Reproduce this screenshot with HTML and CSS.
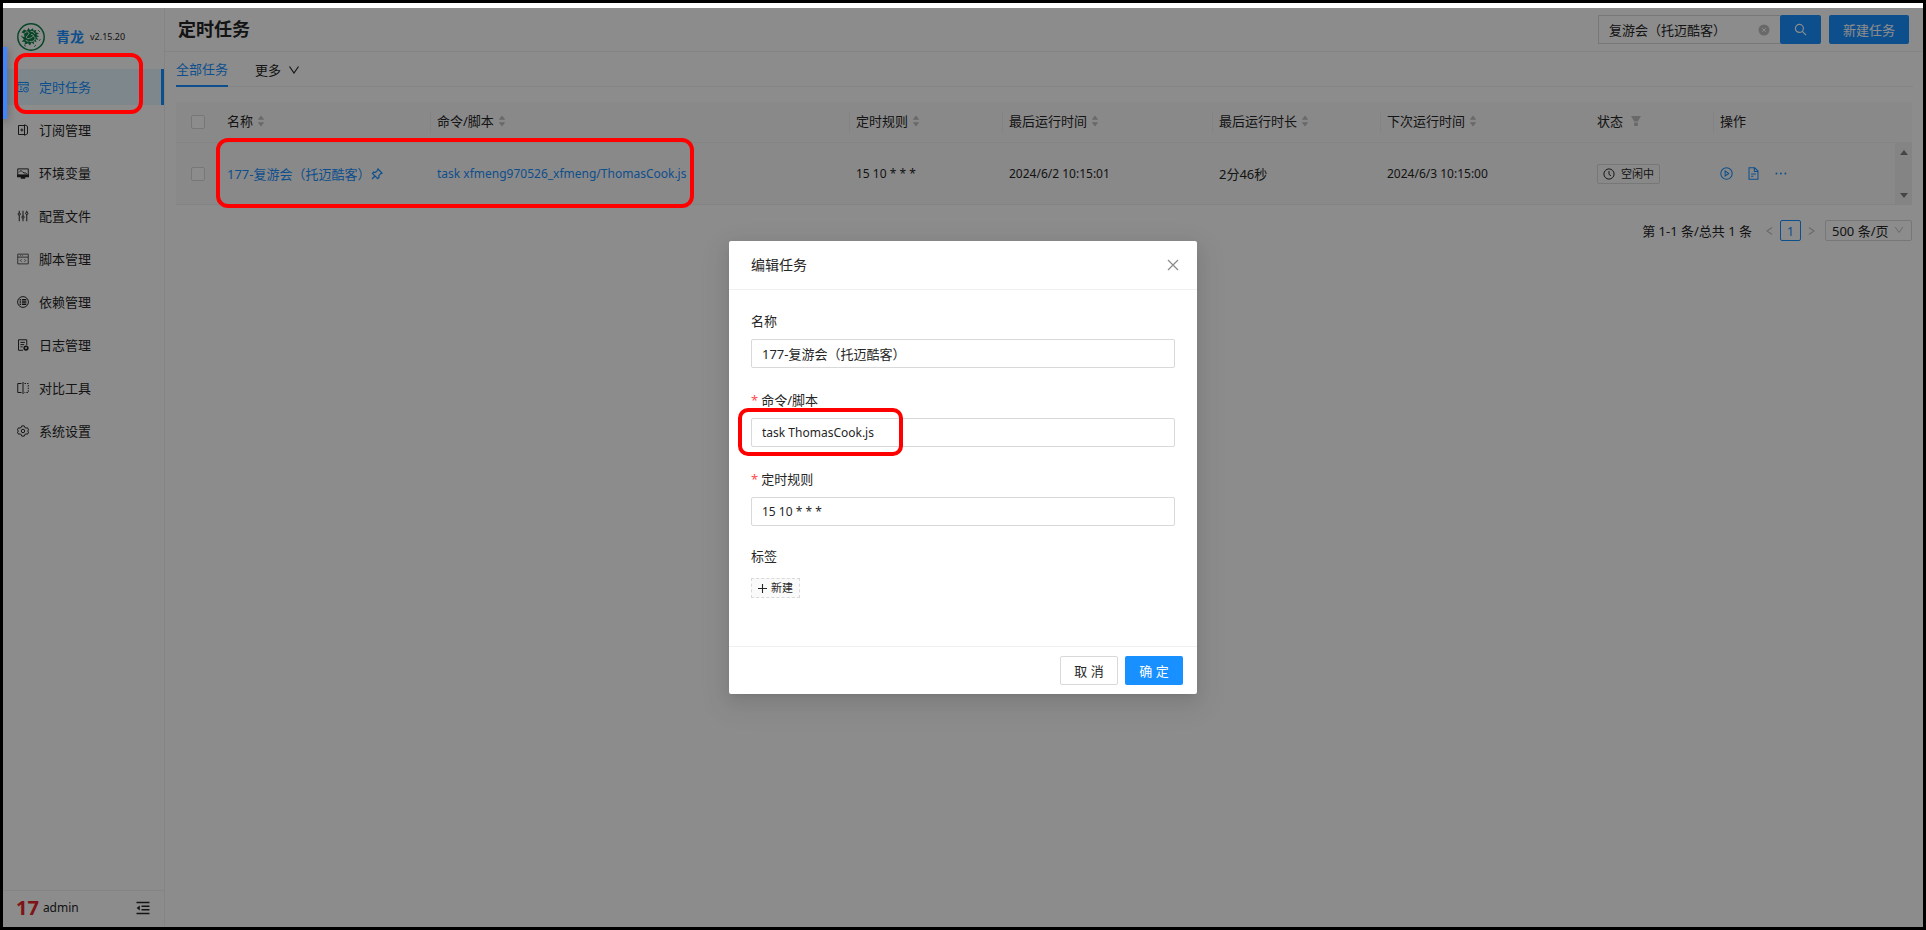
FILE: index.html
```html
<!DOCTYPE html>
<html lang="zh-CN">
<head>
<meta charset="utf-8">
<title>定时任务</title>
<link rel="stylesheet" href="styles.css">
</head>
<body>
<svg class="defs" aria-hidden="true">
  <symbol id="i-sort" viewBox="0 0 8 12"><path d="M4 0.500 7.300 4.800H.7zM4 11.500 7.300 7.200H.7z" fill="currentColor"/></symbol>
  <symbol id="i-down" viewBox="0 0 12 12"><path d="M1.500 2.500 6 9l4.500-6.500" fill="none" stroke="currentColor" stroke-width="1.200"/></symbol>
  <symbol id="i-clock" viewBox="0 0 16 16"><g fill="none" stroke="currentColor" stroke-width="1.300"><circle cx="8" cy="8" r="6.800"/><path d="M8 4v4.500l2.600 1.900"/></g></symbol>
</svg>
<div class="frame">
  <div class="strip"></div>
  <div class="app">
    <aside class="sidebar">
      <div class="brand">
        <svg class="logo" viewBox="0 0 28 28">
          <circle cx="14" cy="14" r="13.200" fill="#fff" stroke="#12804a" stroke-width="1.500"/>
          <path fill="#12804a" d="M4.500 9.500 7 6.500l3 1.200 1.500-3 1.500 2.500 3-2 .5 2.300 3-.5-1 2.200 3.500 1-2.500 1.500 2.800 2.300-3-.2 2.200 3.200-3-1 1 3.200-2.800-1.200.5 3.500-2.700-2-1.500 3-2-2.300-3.500 1.500.5-2.800-3.300-.4 2.200-2-2-2.500 2.800-.2-1-2.500L8.500 11z"/>
          <g fill="none" stroke="#fff" stroke-width=".9" stroke-linecap="round">
            <path d="M8 9.500c2-1.500 4-.5 4 1s-3 2-2.500 4 4 1 5.500-.5 3.500 0 3 2-3 3-5 2.500"/>
            <path d="M14 8.500c1.500-.5 3 .5 3.500 2M14.500 11.500l2 .8M9 17.500l2 .8"/>
          </g>
          <path fill="none" stroke="#12804a" stroke-width=".8" d="M4 13l2 1M21 7l2 2M22 18l1.500-2M7 22l2 1.500M19 22l-2 1.800"/>
        </svg>
        <a class="name" href="#">青龙</a><span class="version">v2.15.20</span>
      </div>
      <nav class="menu">
        <a class="item active" href="#"><svg class="ico" viewBox="0 0 16 16"><path d="M1 9V2h14v5M1 5h14M1 9v5h7M4 8h3M4 11h3M4.500 1v2M11.500 1v2"/><circle cx="12" cy="11.500" r="3.200"/><path d="M12 10v1.700h1.500"/></svg>定时任务</a>
        <a class="item" href="#"><svg class="ico" viewBox="0 0 16 16"><path d="M10 2H2v12h8M10 1v14l4-2V3zM6.500 6v4M4.500 8h4"/></svg>订阅管理</a>
        <a class="item" href="#"><svg class="ico" viewBox="0 0 16 16"><path d="M1 2.500h14v8.500H1z"/><path d="M1 11h14v1.500H1zM5 14.500h6" stroke-width="2"/><path d="M3 7c2-3 3-2 5 0s3 0 5 2"/></svg>环境变量</a>
        <a class="item" href="#"><svg class="ico" viewBox="0 0 16 16"><path d="M3 1v3M3 7v8M8 1v7M8 11v4M13 1v2M13 6v9"/><circle cx="3" cy="5.500" r="1.500"/><circle cx="8" cy="9.500" r="1.500"/><circle cx="13" cy="4.500" r="1.500"/></svg>配置文件</a>
        <a class="item" href="#"><svg class="ico light" viewBox="0 0 16 16"><path d="M1 1.500h14v13H1zM1 5.500h14M4 3.500h1M7 3.500h1M6 8.500 4.500 10 6 11.500M10 8.500l1.500 1.500L10 11.500"/></svg>脚本管理</a>
        <a class="item" href="#"><svg class="ico" viewBox="0 0 16 16"><circle cx="8" cy="8" r="7.200"/><path stroke-width="1.700" d="M3.500 5h1.800M6.500 5h6M3.500 8h1.800M6.500 8h6M3.500 11h1.800M6.500 11h6"/></svg>依赖管理</a>
        <a class="item" href="#"><svg class="ico" viewBox="0 0 16 16"><path d="M8 15H2V1h11v7M4.500 4.500h6M4.500 7.500h5M4.500 10.500h3"/><circle cx="12" cy="12" r="2.400" stroke-width="2.200"/></svg>日志管理</a>
        <a class="item" href="#"><svg class="ico" viewBox="0 0 16 16"><path d="M6 2H1v12h5M8 0v16"/><path d="M10 2h5v12h-5" stroke-dasharray="2 1.500"/></svg>对比工具</a>
        <a class="item" href="#"><svg class="ico" viewBox="0 0 16 16"><path d="M6.300 1.200h3.400l.6 2 1.700 1 2-.5 1.500 2.800L14 8l1.500 1.500-1.500 2.800-2-.5-1.700 1-.6 2H6.300l-.6-2-1.700-1-2 .5L.5 9.500 2 8 .5 6.500 2 3.700l2 .5 1.700-1z"/><circle cx="8" cy="8" r="2.300"/></svg>系统设置</a>
      </nav>
      <div class="user">
        <b class="mark">17</b><span class="who">admin</span>
        <button class="fold" type="button" aria-label="收起菜单"><svg viewBox="0 0 14 14"><path d="M.5 1.500h13M5.500 5.200h8M5.500 8.800h8M.5 12.500h13" stroke="currentColor" stroke-width="1.400"/><path d="M3.800 4.500v5L.6 7z" fill="currentColor"/></svg></button>
      </div>
    </aside>
    <main class="main">
      <header class="head">
        <h1>定时任务</h1>
        <div class="tools">
          <div class="search">
            <div class="field">
              <input type="text" aria-label="搜索任务" value="复游会（托迈酷客）">
              <svg class="clear" viewBox="0 0 12 12"><circle cx="6" cy="6" r="5.500" fill="currentColor"/><path d="m4.200 4.200 3.600 3.600m0-3.600L4.200 7.800" stroke="#fff"/></svg>
            </div>
            <button class="primary go" type="button" aria-label="搜索"><svg viewBox="0 0 14 14"><g fill="none" stroke="currentColor" stroke-width="1.300"><circle cx="5.800" cy="5.800" r="4.300"/><path d="m9 9 4 4"/></g></svg></button>
          </div>
          <button class="primary add" type="button">新建任务</button>
        </div>
      </header>
      <div class="tabs">
        <a class="tab on" href="#">全部任务</a>
        <a class="tab" href="#">更多<svg viewBox="0 0 12 12"><use href="#i-down"/></svg></a>
      </div>
      <section class="list">
        <div class="tablebox">
          <table>
            <colgroup><col class="c-check"><col class="c-wide"><col><col class="c-rule"><col class="c-wide"><col class="c-next"><col class="c-wide"><col class="c-state"><col class="c-ops"></colgroup>
            <thead><tr>
              <th class="check"><input type="checkbox" aria-label="全选"></th>
              <th>名称<svg class="sort"><use href="#i-sort"/></svg></th>
              <th>命令/脚本<svg class="sort"><use href="#i-sort"/></svg></th>
              <th>定时规则<svg class="sort"><use href="#i-sort"/></svg></th>
              <th>最后运行时间<svg class="sort"><use href="#i-sort"/></svg></th>
              <th>最后运行时长<svg class="sort"><use href="#i-sort"/></svg></th>
              <th>下次运行时间<svg class="sort"><use href="#i-sort"/></svg></th>
              <th class="state">状态<svg class="filter" viewBox="0 0 10 11"><path d="M0 .5h10L6.800 6H3.200zM3.200 7h3.600v3.500H3.200z" fill="currentColor"/></svg></th>
              <th>操作</th>
            </tr></thead>
            <tbody><tr>
              <td class="check"><input type="checkbox" aria-label="选择任务"></td>
              <td><a href="#">177-复游会（托迈酷客）<svg class="pin" viewBox="0 0 12 12"><path d="M7 1l4 4-1.200.6-2 2 .2 2-1.300 1L1.500 5.400l1-1.300 2 .2 2-2zM4 8l-3 3" fill="none" stroke="currentColor" stroke-width="1.200"/></svg></a></td>
              <td class="latin"><a href="#">task xfmeng970526_xfmeng/ThomasCook.js</a></td>
              <td class="latin">15 10 * * *</td>
              <td class="latin">2024/6/2 10:15:01</td>
              <td>2分46秒</td>
              <td class="latin">2024/6/3 10:15:00</td>
              <td><span class="status"><svg viewBox="0 0 16 16"><use href="#i-clock"/></svg>空闲中</span></td>
              <td><div class="ops">
                <a href="#" aria-label="运行"><svg viewBox="0 0 16 16"><g fill="none" stroke="currentColor" stroke-width="1.300"><circle cx="8" cy="8" r="7"/><path d="M6.300 5v6l4.500-3z"/></g></svg></a>
                <a href="#" aria-label="日志"><svg viewBox="0 0 16 16"><path d="M2.500 1h7L13.500 5v10h-11zM9 1v4.500h4.500M5 8.500h6M5 11.500h3" fill="none" stroke="currentColor" stroke-width="1.300"/></svg></a>
                <a href="#" aria-label="更多"><svg viewBox="0 0 16 16"><g fill="currentColor"><circle cx="3" cy="8" r="1.200"/><circle cx="8.500" cy="8" r="1.200"/><circle cx="14" cy="8" r="1.200"/></g></svg></a>
              </div></td>
            </tr></tbody>
          </table>
          <div class="scroll" aria-hidden="true"><svg viewBox="0 0 8 5"><path d="M0 5h8L4 0z" fill="currentColor"/></svg><svg viewBox="0 0 8 5"><path d="M0 0h8L4 5z" fill="currentColor"/></svg></div>
        </div>
        <div class="pager">
          <span class="total">第 1-1 条/总共 1 条</span>
          <button class="arrow" type="button" aria-label="上一页"><svg viewBox="0 0 8 10"><path d="M7 1 1 5l6 4" fill="none" stroke="currentColor" stroke-width="1.200"/></svg></button>
          <button class="page" type="button">1</button>
          <button class="arrow" type="button" aria-label="下一页"><svg viewBox="0 0 8 10"><path d="m1 1 6 4-6 4" fill="none" stroke="currentColor" stroke-width="1.200"/></svg></button>
          <div class="size"><select aria-label="每页条数"><option>500 条/页</option></select><svg viewBox="0 0 12 12"><use href="#i-down"/></svg></div>
        </div>
      </section>
    </main>
    <div class="mask">
      <form class="modal" role="dialog" aria-labelledby="dlg">
        <div class="mhead"><h2 id="dlg">编辑任务</h2><button class="close" type="button" aria-label="关闭"><svg viewBox="0 0 12 12"><path d="m1 1 10 10M11 1 1 11" stroke="currentColor" stroke-width="1.300"/></svg></button></div>
        <div class="mbody">
          <div class="row"><label for="f1">名称</label><input id="f1" type="text" value="177-复游会（托迈酷客）"></div>
          <div class="row"><label for="f2"><i>*</i>命令/脚本</label><input id="f2" class="latin" type="text" value="task ThomasCook.js"></div>
          <div class="row"><label for="f3"><i>*</i>定时规则</label><input id="f3" class="latin" type="text" value="15 10 * * *"></div>
          <div class="row tags"><label for="f4">标签</label><button id="f4" class="newtag" type="button"><svg viewBox="0 0 10 10"><path d="M5 0v10M0 5h10" stroke="currentColor" stroke-width="1.200"/></svg>新建</button></div>
        </div>
        <div class="mfoot"><button class="cancel" type="button">取 消</button><button class="primary ok" type="button">确 定</button></div>
      </form>
    </div>
    <div class="edge"></div>
    <div class="ring ring-menu"></div>
    <div class="ring ring-row"></div>
    <div class="ring ring-cmd"></div>
  </div>
</div>
</body>
</html>
```
FILE: styles.css
```css
* { box-sizing: border-box; }
body { margin: 0; background: #000; color: #262626; font: 13px/20px "Noto Sans", "Noto Sans CJK SC", sans-serif; }
a { color: #1890ff; text-decoration: none; }
button, input, select { font: inherit; color: inherit; margin: 0; }
button { padding: 0; border: 0; background: none; cursor: pointer; }
svg { display: block; flex: none; }
h1, h2 { margin: 0; }
.defs { position: absolute; width: 0; height: 0; }
.latin { font-size: 12px; }

.frame { display: flex; flex-direction: column; min-height: 100vh; padding: 3px; }
.strip { height: 5px; background: #fff; }
.app { position: relative; flex: 1; display: flex; background: #fff; }

.sidebar { display: flex; flex-direction: column; width: 162px; border-right: 1px solid #f0f0f0; }
.brand { display: flex; align-items: center; height: 61px; padding: 0 0 4px 14px; }
.logo { width: 28px; height: 28px; margin-right: 11px; }
.name { font-size: 14px; font-weight: 700; }
.version { margin-left: 6px; font-size: 9px; }
.menu { flex: 1; display: flex; flex-direction: column; gap: 7px; }
.item { display: flex; align-items: center; gap: 10px; height: 36px; padding-left: 14px; color: #262626; }
.item.active { color: #1890ff; background: #e6f7ff; border-right: 3px solid #1890ff; }
.ico { width: 12px; height: 12px; fill: none; stroke: currentColor; stroke-width: 1.3; }
.ico.light { stroke-width: 1; }
.user { display: flex; align-items: center; height: 37px; padding: 0 14px 2px 13px; border-top: 1px solid #f0f0f0; }
.mark { color: #e8262a; font-size: 20px; }
.who { margin-left: 4px; font-size: 12px; }
.fold { margin-left: auto; }
.fold svg { width: 14px; height: 14px; }

.main { flex: 1; min-width: 0; }
.head { display: flex; align-items: center; justify-content: space-between; height: 44px; padding: 0 14px 0 13px; border-bottom: 1px solid #f0f0f0; }
.head h1 { font-size: 18px; line-height: 28px; padding-bottom: 2px; }
.tools { display: flex; gap: 8px; }
.search { display: flex; }
.field { display: flex; align-items: center; width: 182px; border: 1px solid #d9d9d9; border-right: 0; padding: 0 10px; }
.field input { flex: 1; min-width: 0; padding: 0; border: 0; background: none; outline: 0; }
.clear { width: 12px; height: 12px; color: #bfbfbf; }
.primary { height: 29px; color: #fff; background: #1890ff; border-radius: 2px; }
.go { display: flex; align-items: center; justify-content: center; width: 41px; }
.go svg { width: 13px; height: 13px; }
.add { width: 80px; }

.tabs { display: flex; gap: 27px; margin: 0 10px 0 11px; height: 35px; border-bottom: 1px solid #f0f0f0; }
.tab { display: flex; align-items: center; gap: 7px; height: 35px; color: #262626; }
.tab.on { color: #1890ff; border-bottom: 2px solid #1890ff; }
.tab svg { width: 12px; height: 12px; }

.list { padding: 15px 11px 0; }
.tablebox { position: relative; }
table { width: 100%; table-layout: fixed; border-collapse: separate; border-spacing: 0; }
.c-check { width: 44px; }
.c-wide { width: 210px; }
.c-rule { width: 153px; }
.c-next { width: 168px; }
.c-state { width: 123px; }
.c-ops { width: 199px; }
th, td { padding: 0 8px 0 7px; text-align: left; font-weight: 400; white-space: nowrap; border-bottom: 1px solid #f0f0f0; background: #fafafa; }
th { height: 41px; padding-bottom: 2px; }
td { height: 62px; }
th + th { background: linear-gradient(#eee, #eee) left center / 1px 21px no-repeat #fafafa; }
th.check + th, th.state { background: #fafafa; }
.check { padding: 0 0 0 15px; }
.check input { display: block; appearance: none; width: 14px; height: 14px; border: 1px solid #d9d9d9; border-radius: 2px; background: #fff; }
.sort, .filter { display: inline-block; width: 8px; height: 12px; margin-left: 4px; vertical-align: -1px; color: #bfbfbf; }
.filter { width: 10px; margin-left: 8px; }
.pin { display: inline-block; width: 12px; height: 12px; vertical-align: -1px; }
.status { display: inline-flex; align-items: center; gap: 6px; height: 20px; padding: 0 5px; font-size: 11px; border: 1px solid #d9d9d9; border-radius: 2px; vertical-align: middle; }
.status svg { width: 12px; height: 12px; }
.ops { display: flex; gap: 14px; }
.ops svg { width: 13px; height: 13px; }
.scroll { position: absolute; right: 0; top: 41px; bottom: 0; width: 17px; display: flex; flex-direction: column; justify-content: space-between; align-items: center; padding: 7px 0; background: #f1f1f1; color: #7f7f7f; }
.scroll svg { width: 8px; height: 5px; }

.pager { display: flex; align-items: center; justify-content: flex-end; margin-top: 15px; line-height: 18px; }
.arrow { width: 7px; color: #bfbfbf; }
.arrow svg { width: 7px; height: 10px; }
.total { margin-right: 14px; }
.page { width: 21px; height: 21px; margin: 0 7px; color: #1890ff; border: 1px solid #1890ff; border-radius: 2px; }
.size { position: relative; width: 87px; height: 21px; margin-left: 10px; }
.size select { display: block; width: 100%; height: 100%; padding: 0 6px; appearance: none; border: 1px solid #d9d9d9; border-radius: 2px; background: none; line-height: 18px; }
.size svg { position: absolute; right: 8px; top: 5px; width: 10px; height: 10px; color: #bfbfbf; }

.mask { position: absolute; inset: 0; display: flex; align-items: center; justify-content: center; background: rgba(0, 0, 0, .45); }
.modal { width: 468px; background: #fff; border-radius: 2px; box-shadow: 0 3px 6px -4px rgba(0, 0, 0, .12), 0 6px 16px rgba(0, 0, 0, .08), 0 9px 28px 8px rgba(0, 0, 0, .05); }
.mhead { display: flex; align-items: center; justify-content: space-between; height: 49px; padding: 0 18px 0 22px; border-bottom: 1px solid #f0f0f0; }
.mhead h2 { font-size: 14px; font-weight: 400; }
.close { color: #8c8c8c; }
.close svg { width: 12px; height: 12px; }
.mbody { display: flex; flex-direction: column; gap: 22px; height: 356px; padding: 21px 22px 0; }
.row label { display: block; height: 28px; }
.row input { display: block; width: 100%; height: 29px; padding: 0 10px 1px; border: 1px solid #d9d9d9; border-radius: 2px; outline: 0; background: #fff; }
.row i { margin-right: 3px; color: #ff4d4f; font-style: normal; }
.tags { margin-top: -2px; }
.tags label { height: 32px; }
.newtag { display: flex; align-items: center; gap: 4px; height: 20px; padding: 0 6px; font-size: 11px; border: 1px dashed #d9d9d9; background: #fafafa; }
.newtag svg { width: 9px; height: 9px; }
.mfoot { display: flex; justify-content: flex-end; gap: 7px; padding: 9px 14px; border-top: 1px solid #f0f0f0; }
.cancel, .ok { width: 58px; height: 29px; }
.cancel { border: 1px solid #d9d9d9; border-radius: 2px; }

.edge { position: absolute; left: 0; top: 39px; width: 4px; height: 72px; background: #3f85ff; box-shadow: 0 2px 8px rgba(0, 0, 0, .4); }
.ring { position: absolute; border: 4px solid #f00; border-radius: 12px; pointer-events: none; }
.ring-menu { left: 11px; top: 45px; width: 129px; height: 61px; }
.ring-row { left: 213px; top: 130px; width: 478px; height: 70px; }
.ring-cmd { left: 735px; top: 400px; width: 165px; height: 48px; border-radius: 10px; }
```
